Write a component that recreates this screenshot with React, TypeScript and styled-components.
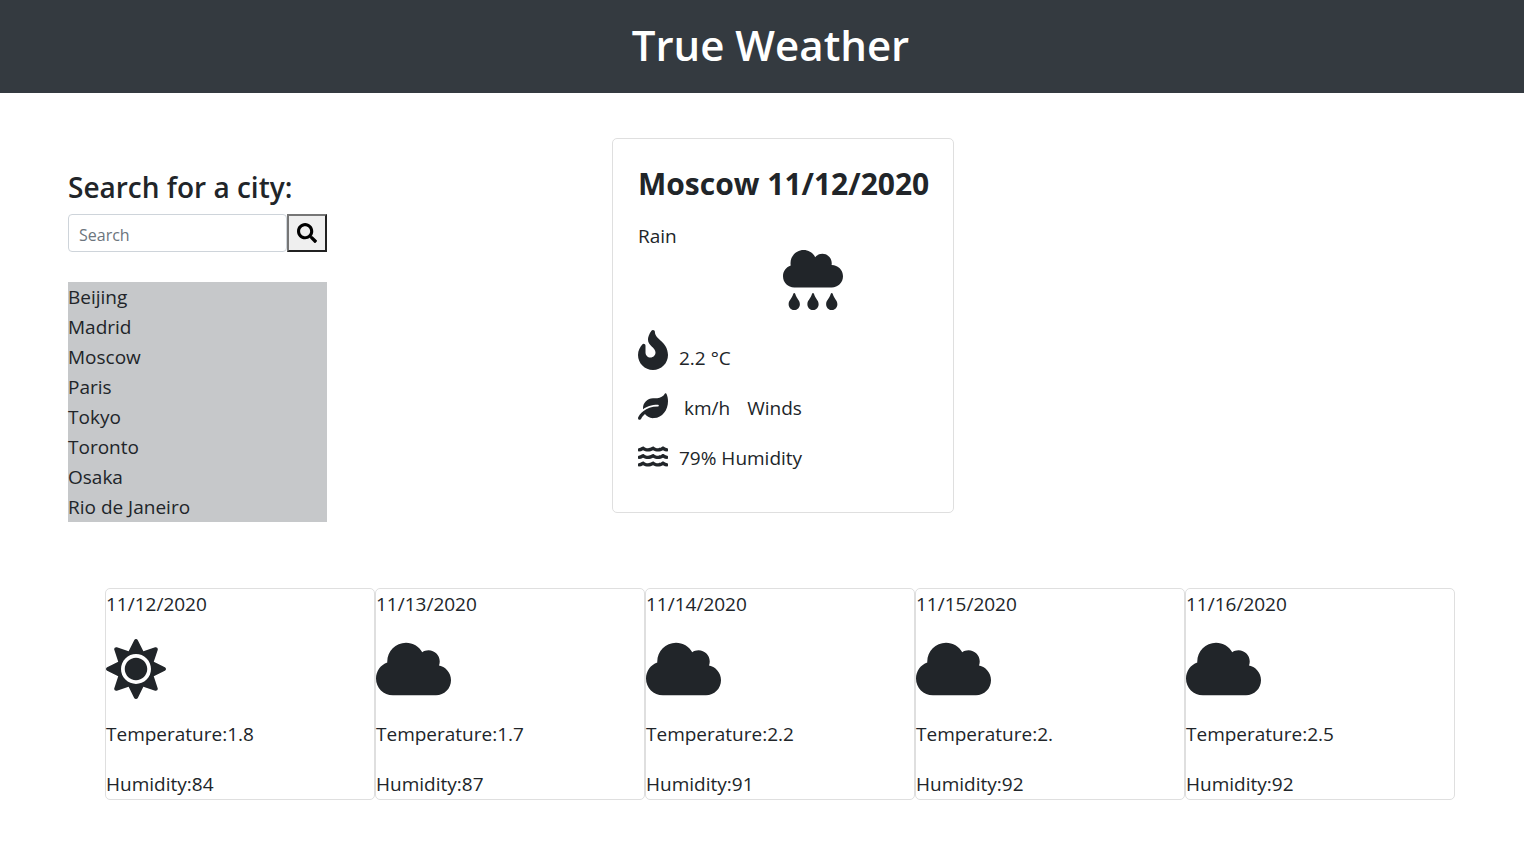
import React from "react";
import styled, { createGlobalStyle } from "styled-components";
import {
  FaCloud,
  FaCloudRain,
  FaFire,
  FaLeaf,
  FaSearch,
  FaSun,
  FaWater,
} from "react-icons/fa";

const GlobalStyle = createGlobalStyle`
  *, *::before, *::after { box-sizing: border-box; }
  body {
    margin: 0;
    background: #fff;
    color: #212529;
    font-family: "Open Sans", "Noto Sans", sans-serif;
    font-size: 19px;
    line-height: 30px;
  }
  h1, h2, h3, p, ul { margin: 0; padding: 0; font-weight: 400; }
  svg { display: block; }
`;

const Header = styled.header`
  padding: 18px 0 21px 17px;
  background: #343a40;
  color: #fff;
  text-align: center;
`;

const Title = styled.h1`
  && { font-weight: 600; }
  font-size: 42px;
  line-height: 54px;
`;

const Main = styled.main`
  display: grid;
  grid-template-columns: 259px minmax(24px, 1fr) 342px 2fr;
  align-items: start;
  padding: 45px 0 66px 68px;
`;

const Sidebar = styled.aside`
  grid-column: 1;
  margin-top: 31px;
`;

const SearchForm = styled.form`
  display: grid;
  grid-template-columns: 1fr 40px;
  margin-bottom: 30px;
`;

const SearchLabel = styled.label`
  grid-column: 1 / -1;
  margin-bottom: 9px;
  font-size: 28px;
  font-weight: 600;
  line-height: 36px;
  white-space: nowrap;
`;

const SearchInput = styled.input`
  min-width: 0;
  height: 38px;
  padding: 5px 10px 2px;
  border: 1px solid #ced4da;
  border-radius: 4px;
  color: #495057;
  font-family: inherit;
  font-size: 16px;
  &::placeholder { color: #6c757d; opacity: 1; }
`;

const SearchButton = styled.button`
  display: flex;
  align-items: center;
  justify-content: center;
  height: 38px;
  padding: 0;
  border: 2px solid;
  border-color: #767676 #212121 #212121 #767676;
  background: #efefef;
  color: #000;
  font-size: 20px;
`;

const CityList = styled.ul`
  background: #c6c8ca;
  list-style: none;
`;

const Card = styled.section`
  border: 1px solid #dfdfdf;
  border-radius: 5px;
  background: #fff;
`;

const CurrentCard = styled(Card)`
  grid-column: 3;
  padding: 27px 25px 39px;
`;

const CurrentTitle = styled.h2`
  && { font-weight: 700; }
  margin-bottom: 19px;
  font-size: 30px;
  line-height: 36px;
  white-space: nowrap;
`;

const CurrentIcon = styled.div`
  margin: -1px 0 20px 50%;
  font-size: 60px;
`;

const Measure = styled.p<{ $iconHeight: number }>`
  display: flex;
  align-items: flex-end;
  gap: 11px;
  & + & { margin-top: 20px; }
  svg {
    width: 30px;
    height: ${({ $iconHeight }) => $iconHeight}px;
    margin-bottom: 3px;
  }
`;

const Wind = styled.span`
  display: flex;
  gap: 17px;
  padding-left: 5px;
`;

const Forecast = styled.div`
  display: flex;
  padding: 0 69px 60px 105px;
`;

const DayCard = styled(Card)`
  display: flex;
  flex: 1 1 0;
  flex-direction: column;
  gap: 20px;
`;

const DayIcon = styled.div<{ $width: number }>`
  svg {
    width: ${({ $width }) => $width}px;
    height: 60px;
  }
`;

const cities = ["Beijing", "Madrid", "Moscow", "Paris", "Tokyo", "Toronto", "Osaka", "Rio de Janeiro"];

const days = [
  { date: "11/12/2020", Icon: FaSun, iconWidth: 60, temperature: "1.8", humidity: 84 },
  { date: "11/13/2020", Icon: FaCloud, iconWidth: 75, temperature: "1.7", humidity: 87 },
  { date: "11/14/2020", Icon: FaCloud, iconWidth: 75, temperature: "2.2", humidity: 91 },
  { date: "11/15/2020", Icon: FaCloud, iconWidth: 75, temperature: "2.", humidity: 92 },
  { date: "11/16/2020", Icon: FaCloud, iconWidth: 75, temperature: "2.5", humidity: 92 },
];

export default function App() {
  return (
    <>
      <GlobalStyle />
      <Header>
        <Title>True Weather</Title>
      </Header>
      <Main>
        <Sidebar>
          <SearchForm onSubmit={(event) => event.preventDefault()}>
            <SearchLabel htmlFor="city">Search for a city:</SearchLabel>
            <SearchInput id="city" type="text" placeholder="Search" />
            <SearchButton type="submit" aria-label="Search">
              <FaSearch />
            </SearchButton>
          </SearchForm>
          <CityList>
            {cities.map((city) => (
              <li key={city}>{city}</li>
            ))}
          </CityList>
        </Sidebar>
        <CurrentCard>
          <CurrentTitle>Moscow 11/12/2020</CurrentTitle>
          <p>Rain</p>
          <CurrentIcon>
            <FaCloudRain />
          </CurrentIcon>
          <Measure $iconHeight={40}>
            <FaFire />
            <span>2.2 °C</span>
          </Measure>
          <Measure $iconHeight={27}>
            <FaLeaf />
            <Wind>
              <span>km/h</span>
              <span>Winds</span>
            </Wind>
          </Measure>
          <Measure $iconHeight={27}>
            <FaWater />
            <span>79% Humidity</span>
          </Measure>
        </CurrentCard>
      </Main>
      <Forecast>
        {days.map(({ date, Icon, iconWidth, temperature, humidity }) => (
          <DayCard key={date}>
            <p>{date}</p>
            <DayIcon $width={iconWidth}>
              <Icon />
            </DayIcon>
            <p>Temperature:{temperature}</p>
            <p>Humidity:{humidity}</p>
          </DayCard>
        ))}
      </Forecast>
    </>
  );
}
